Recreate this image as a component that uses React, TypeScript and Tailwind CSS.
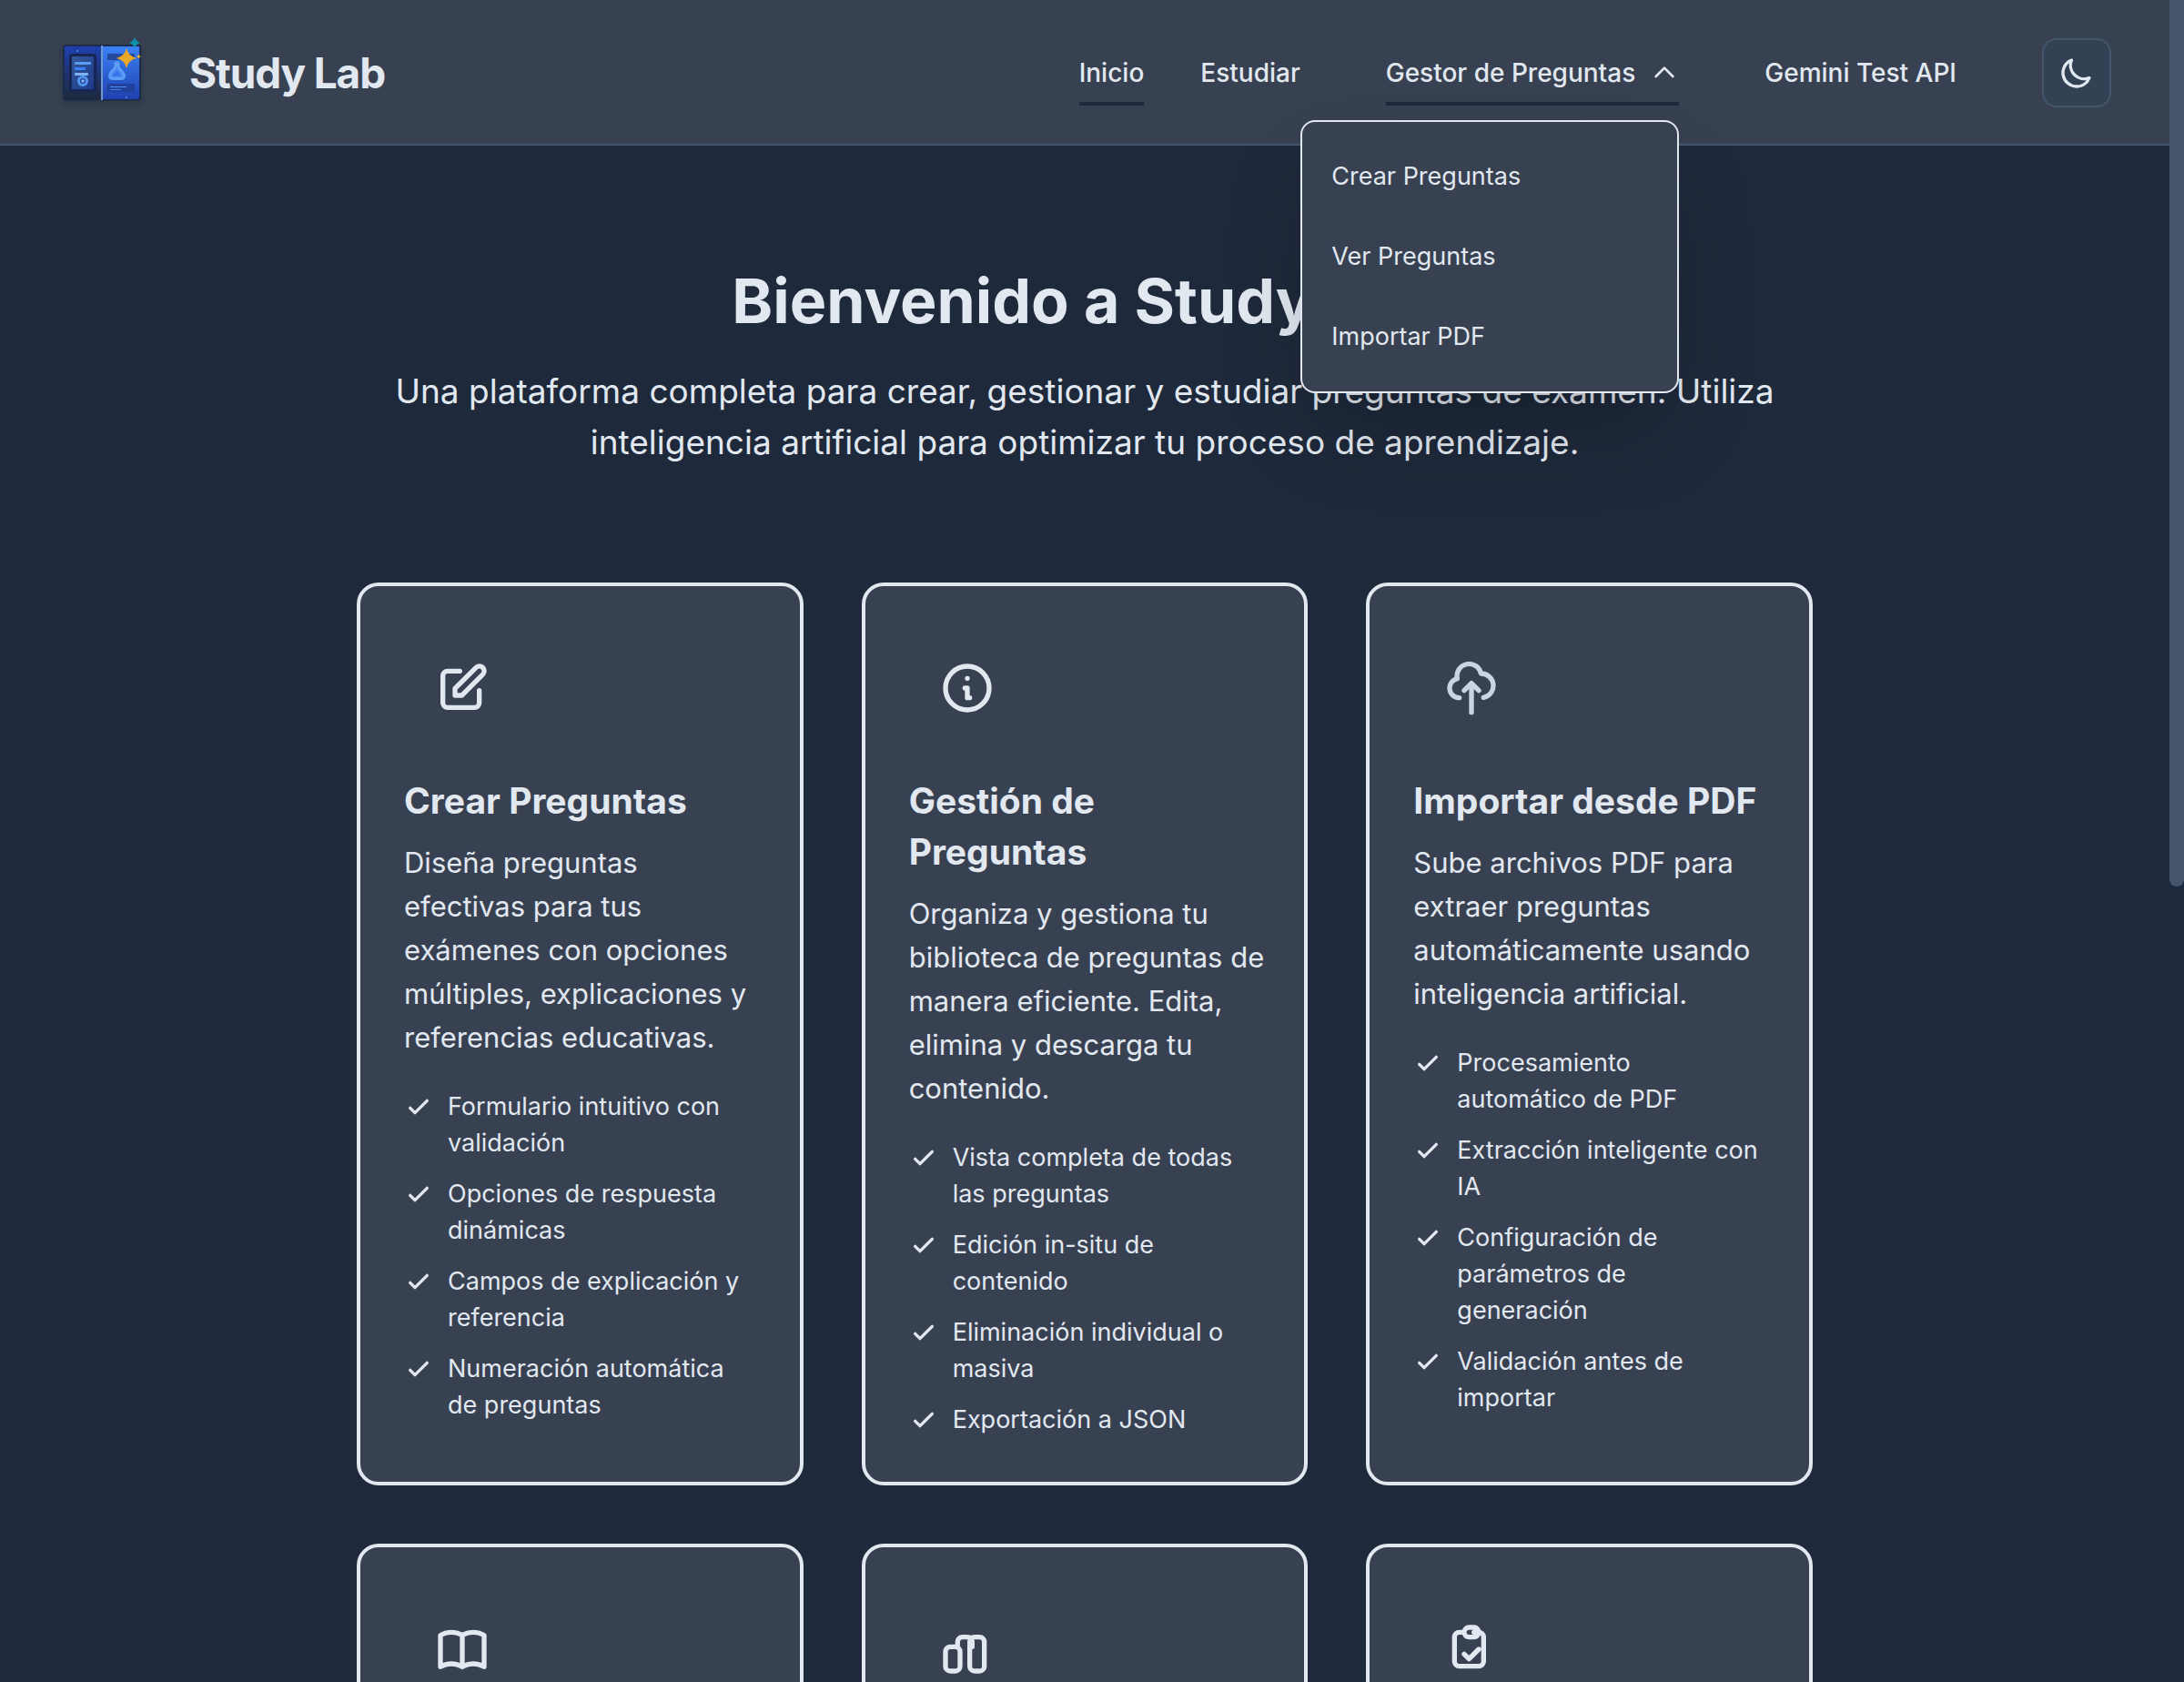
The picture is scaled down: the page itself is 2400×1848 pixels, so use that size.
import React from "react";

const FONT = "font-['Inter',sans-serif]";

function Icon({ children, className, strokeWidth = 2 }: { children: React.ReactNode; className: string; strokeWidth?: number }) {
  return (
    <svg viewBox="0 0 24 24" fill="none" stroke="currentColor" strokeWidth={strokeWidth} strokeLinecap="round" strokeLinejoin="round" className={className} aria-hidden="true">
      {children}
    </svg>
  );
}

function Logo() {
  return (
    <svg viewBox="0 5 110 90" className="h-[90px] w-[110px] shrink-0" role="img" aria-label="Study Lab">
      <defs>
        <linearGradient id="leftPage" x1="0" y1="0" x2="0" y2="1">
          <stop offset="0" stopColor="#1e40af" />
          <stop offset="1" stopColor="#1e293b" />
        </linearGradient>
        <linearGradient id="rightPage" x1="0" y1="0" x2="0" y2="1">
          <stop offset="0" stopColor="#3b82f6" />
          <stop offset="1" stopColor="#1e40af" />
        </linearGradient>
        <linearGradient id="screen" x1="0" y1="0" x2="1" y2="1">
          <stop offset="0" stopColor="#345a9a" />
          <stop offset="1" stopColor="#1e3a8a" />
        </linearGradient>
        <filter id="soft" x="-20%" y="-20%" width="140%" height="150%">
          <feDropShadow dx="0" dy="4" stdDeviation="3" floodColor="#1e293b" floodOpacity="0.4" />
        </filter>
      </defs>
      <g filter="url(#soft)">
        <rect x="9" y="19" width="86" height="61.500" rx="3" fill="#1f2c4c" />
      </g>
      <path d="M11 21h41v58H13a2 2 0 0 1-2-2z" fill="url(#leftPage)" />
      <path d="M52 21h41v56a2 2 0 0 1-2 2H52z" fill="url(#rightPage)" />
      <rect x="51" y="20" width="2" height="60" fill="#6b9bd1" />
      <rect x="16" y="29" width="30" height="42" rx="3" fill="#172554" />
      <rect x="19" y="32" width="24" height="36" rx="1" fill="url(#screen)" />
      <rect x="22" y="38" width="18" height="3" rx="1" fill="#5a9cf0" />
      <rect x="22" y="44" width="12" height="3" rx="1" fill="#3b82f6" />
      <rect x="22" y="50" width="15" height="3" rx="1" fill="#7eb2f5" />
      <circle cx="31" cy="59" r="4.500" fill="#1e3a8a" stroke="#5596ee" strokeWidth="3" />
      <circle cx="31" cy="59" r="1.800" fill="#8bbcf8" />
      <rect x="24" y="25" width="2" height="2" fill="#4c75d0" />
      <rect x="58" y="29" width="30" height="7" rx="1" fill="#24489b" />
      <rect x="58" y="62" width="30" height="9" rx="1" fill="#21409a" />
      <path d="M61 65.500h18" stroke="#4f8ff0" />
      <path d="M61 68.500h12" stroke="#3b82f6" />
      <path d="M67 39h3v3q0 2 1.500 3.500 5 5 5 8 0 3-4 3h-8q-4 0-4-3 0-3 5-8 1.500-1.500 1.500-3.500z" fill="#4a8af2" stroke="#5c9df6" strokeWidth="3" strokeLinejoin="round" />
      <path d="M68.500 48q4.500 3 4.500 5.500h-9q0-2.500 4.500-5.500z" fill="#3473e8" />
      <rect x="78" y="76" width="2" height="2" fill="#4c75d0" />
      <path d="M79 23Q81 31.500 90 34 81 36 79 45 77 36 68 34 77 31.500 79 23Z" fill="#e9a826" />
      <path d="M88 11Q89.500 15.500 94 17 89.500 18.500 88 23 86.500 18.500 82 17 86.500 15.500 88 11Z" fill="#0f91ab" />
      <path d="M92.500 29.500Q93 31.500 95 32 93 32.500 92.500 34.500 92 32.500 90 32 92 31.500 92.500 29.500Z" fill="#f0b429" />
    </svg>
  );
}

type Feature = { title: string; text: string; items: string[]; icon: React.ReactNode; tone?: string };

const features: Feature[] = [
  {
    title: "Crear Preguntas",
    text: "Diseña preguntas\nefectivas para tus exámenes con opciones múltiples, explicaciones y referencias educativas.",
    items: ["Formulario intuitivo con validación", "Opciones de respuesta dinámicas", "Campos de explicación y referencia", "Numeración automática de preguntas"],
    icon: <path d="M11 5H6a2 2 0 00-2 2v11a2 2 0 002 2h11a2 2 0 002-2v-5m-1.414-9.414a2 2 0 112.828 2.828L11.828 15H9v-2.828l8.586-8.586z" />,
  },
  {
    title: "Gestión de Preguntas",
    text: "Organiza y gestiona tu biblioteca de preguntas de manera eficiente. Edita, elimina y descarga tu contenido.",
    items: ["Vista completa de todas las preguntas", "Edición in-situ de contenido", "Eliminación individual o masiva", "Exportación a JSON"],
    icon: <path d="M13 16h-1v-4h-1m1-4h.01M21 12a9 9 0 11-18 0 9 9 0 0118 0z" />,
  },
  {
    title: "Importar desde PDF",
    text: "Sube archivos PDF para extraer preguntas automáticamente usando inteligencia artificial.",
    items: ["Procesamiento automático de PDF", "Extracción inteligente con IA", "Configuración de parámetros de\ngeneración", "Validación antes de importar"],
    icon: <path d="M7 16a4 4 0 01-.88-7.903A5 5 0 1115.9 6L16 6a5 5 0 011 9.9M15 13l-3-3m0 0l-3 3m3-3v12" />,
    tone: "text-slate-300",
  },
];

const upcoming: { label: string; icon: React.ReactNode }[] = [
  {
    label: "Estudio",
    icon: <path d="M12 6.253v13m0-13C10.832 5.477 9.246 5 7.500 5S4.168 5.477 3 6.253v13C4.168 18.477 5.754 18 7.500 18s3.332.477 4.500 1.253m0-13C13.168 5.477 14.754 5 16.500 5c1.747 0 3.332.477 4.500 1.253v13C19.832 18.477 18.247 18 16.500 18c-1.746 0-3.332.477-4.500 1.253" />,
  },
  {
    label: "Estadísticas",
    icon: <path d="M9 19v-6a2 2 0 00-2-2H5a2 2 0 00-2 2v6a2 2 0 002 2h2a2 2 0 002-2zM8 11V9a2 2 0 012-2h2a2 2 0 012 2v2M13 9v10a2 2 0 002 2h2a2 2 0 002-2V9a2 2 0 00-2-2h-2a2 2 0 00-2 2z" />,
  },
  {
    label: "Validación",
    icon: <path d="M9 5H7a2 2 0 00-2 2v10a2 2 0 002 2h8a2 2 0 002-2V7a2 2 0 00-2-2h-2M9 5a2 2 0 002 2h2a2 2 0 002-2M9 5a2 2 0 012-2h2a2 2 0 012 2m-6 9l2 2 4-4" />,
  },
];

function CardIcon({ children, tone = "text-slate-200" }: { children: React.ReactNode; tone?: string }) {
  return (
    <div className={"flex size-32 items-center justify-center " + tone}>
      <Icon className="size-16">{children}</Icon>
    </div>
  );
}

function Card({ title, text, items, icon, tone }: Feature) {
  return (
    <article className="rounded-3xl border-4 border-slate-200 bg-[#384151] p-12">
      <CardIcon tone={tone}>{icon}</CardIcon>
      <h2 className="mt-8 text-[39px] leading-[56px] font-bold">{title}</h2>
      <p className="mt-4 -mr-3 text-[31px] leading-[48px] whitespace-pre-line">{text}</p>
      <ul className="mt-8 flex flex-col gap-4 text-[27px] leading-10">
        {items.map((item) => (
          <li key={item} className="flex gap-4">
            <Icon className="mt-1 size-8 shrink-0" strokeWidth={2.5}><path d="M5 13l4 4L19 7" /></Icon>
            <span className="whitespace-pre-line">{item}</span>
          </li>
        ))}
      </ul>
    </article>
  );
}

export default function App() {
  return (
    <div className={"flex h-screen overflow-hidden bg-[#1e293b] text-slate-200 " + FONT}>
      <div className="min-w-0 flex-1">
        <header className="relative z-10 flex h-40 items-center justify-between border-b-2 border-slate-600 bg-[#384151] pt-0.5 pr-16 pl-[60px]">
          <a href="#" className="flex items-center gap-[38px]">
            <Logo />
            <span className="text-[46px] leading-none font-bold tracking-tight">Study Lab</span>
          </a>
          <nav className="flex items-center text-[28px] leading-10 font-medium">
            <a href="#" className="border-b-4 border-[#1e293b] pt-4 pb-3">Inicio</a>
            <a href="#" className="ml-[62px] border-b-4 border-transparent pt-4 pb-3">Estudiar</a>
            <div className="relative ml-[94px]">
              <button type="button" aria-expanded="true" className="flex items-center gap-4 border-b-4 border-[#1e293b] pt-4 pb-3">
                Gestor de Preguntas
                <Icon className="size-8"><path d="M5 15l7-7 7 7" /></Icon>
              </button>
              <div className="absolute top-full right-0 mt-4 w-[416px] rounded-2xl border-2 border-slate-200 bg-[#384151] py-4 text-[27px] font-normal shadow-[0_50px_100px_-24px_rgba(0,0,0,0.25)]">
                {["Crear Preguntas", "Ver Preguntas", "Importar PDF"].map((t) => (
                  <a key={t} href="#" className="block px-8 py-6">{t}</a>
                ))}
              </div>
            </div>
            <a href="#" className="ml-[94px] border-b-4 border-transparent pt-4 pb-3">Gemini Test API</a>
            <button type="button" aria-label="Cambiar tema" className="ml-[94px] flex size-19 items-center justify-center rounded-2xl border-2 border-slate-600 bg-[#334155]">
              <Icon className="size-10"><path d="M20.354 15.354A9 9 0 018.646 3.646 9.003 9.003 0 0012 21a9.003 9.003 0 008.354-5.646z" /></Icon>
            </button>
          </nav>
        </header>
        <main className="mx-auto max-w-[1600px] pt-32">
          <section className="text-center">
            <h1 className="text-[68px] leading-[84px] font-bold">Bienvenido a Study Lab</h1>
            <p className="mx-auto mt-[30px] max-w-[1536px] text-[37px] leading-[56px]">
              Una plataforma completa para crear, gestionar y estudiar preguntas de examen. Utiliza inteligencia artificial para optimizar tu proceso de aprendizaje.
            </p>
          </section>
          <section className="mt-[126px] grid grid-cols-3 gap-16">
            {features.map((f) => (
              <Card key={f.title} {...f} />
            ))}
            {upcoming.map((u) => (
              <article key={u.label} aria-label={u.label} className="min-h-96 rounded-3xl border-4 border-slate-200 bg-[#384151] p-12">
                <CardIcon>{u.icon}</CardIcon>
              </article>
            ))}
          </section>
        </main>
      </div>
      <div className="w-4 shrink-0 bg-[#1e293b]">
        <div className="h-[974px] rounded-b-lg bg-slate-600" />
      </div>
    </div>
  );
}
